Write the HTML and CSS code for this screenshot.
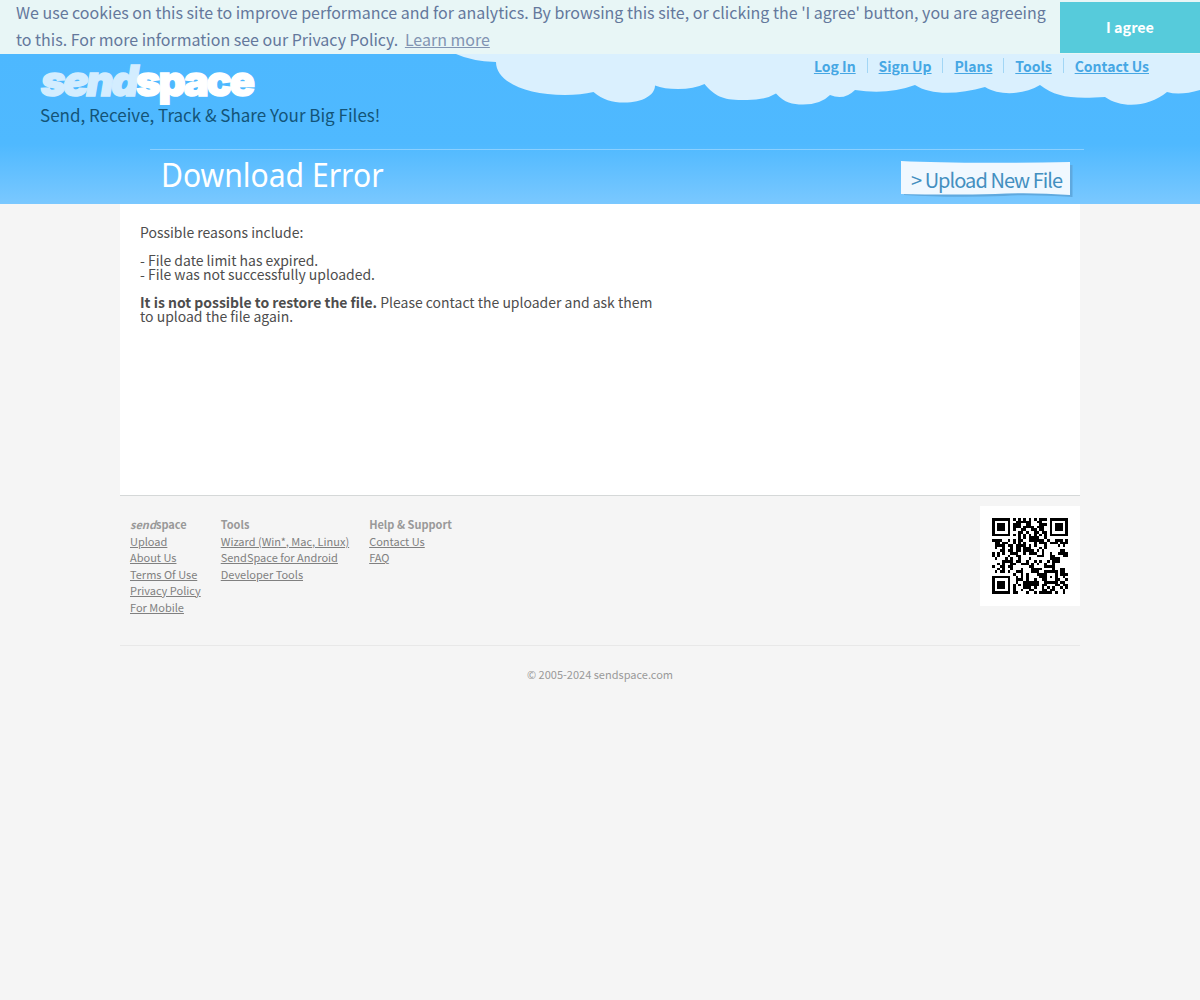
FILE: index.html
```html
<!DOCTYPE html>
<html lang="en">
<head>
<meta charset="utf-8">
<title>Download Error</title>
<link rel="stylesheet" href="styles.css">
</head>
<body>
<div class="cookie">
  <p class="cookie-text">We use cookies on this site to improve performance and for analytics. By browsing this site, or clicking the 'I agree' button, you are agreeing<br>to this. For more information see our Privacy Policy. <a class="learn" href="#">Learn more</a></p>
  <button class="agree">I agree</button>
</div>
<header class="header">
  <svg class="clouds" width="750" height="56" viewBox="450 54 750 56" aria-hidden="true">
    <path fill="#daf0fe" d="M456 54Q471 61 496 62C496 82 526 95 565 95Q581 95 593.500 92C603 100 612 102.500 624 102.500C643 102.500 655 95 655 85.500Q664 89 678 89Q694 89 704.500 84C715 96 722 100 742 100Q764 101 776 93.500C785 103 792 104.500 803 104.500Q821 104.500 830 95Q844 101 855 90Q888 95 915 85C930 95 957 95 985 87C1000 96 1023 95 1040 85C1056 97 1070 99 1105 97C1122 109 1149 107 1167 92Q1180 96 1200 90V54Z"/>
  </svg>
  <div class="top">
    <div class="brand">
      <div class="logo"><i>send</i><span>space</span></div>
      <div class="tagline">Send, Receive, Track &amp; Share Your Big Files!</div>
    </div>
    <nav class="nav"><a href="#">Log In</a><a href="#">Sign Up</a><a href="#">Plans</a><a href="#">Tools</a><a href="#">Contact Us</a></nav>
  </div>
  <div class="titlebar">
    <h1>Download Error</h1>
    <a class="upload" href="#">
      <svg class="paper" width="174" height="38" viewBox="0 0 174 38" aria-hidden="true"><path fill="#5fa9df" d="M4 5L172.500 4V36Q130 33 104 35Q50 37 4 34Z"/><path fill="#f0f8ff" d="M1 0Q60 3 170 1V34Q130 31 95 33Q50 34 1 33Z"/></svg>
      <span>&gt; Upload New File</span>
    </a>
  </div>
</header>
<main class="content">
  <p>Possible reasons include:</p>
  <p>- File date limit has expired.<br>- File was not successfully uploaded.</p>
  <p><b>It is not possible to restore the file.</b> Please contact the uploader and ask them<br>to upload the file again.</p>
</main>
<footer class="footer">
  <div class="links">
    <div class="col"><b><i>send</i>space</b><a href="#">Upload</a><a href="#">About Us</a><a href="#">Terms Of Use</a><a href="#">Privacy Policy</a><a href="#">For Mobile</a></div>
    <div class="col"><b>Tools</b><a href="#">Wizard (Win*, Mac, Linux)</a><a href="#">SendSpace for Android</a><a href="#">Developer Tools</a></div>
    <div class="col"><b>Help &amp; Support</b><a href="#">Contact Us</a><a href="#">FAQ</a></div>
    <div class="qr"><svg id="qr" width="76" height="76" viewBox="0 0 29 29" shape-rendering="crispEdges"></svg></div>
  </div>
  <div class="copyright">© 2005-2024 sendspace.com</div>
</footer>
<script src="qr.js"></script>
</body>
</html>
```
FILE: styles.css
```css
* { box-sizing: border-box; }
body { margin: 0; background: #f5f5f5; font-family: "Noto Sans CJK JP", sans-serif; color: #4d4d4d; }
p { margin: 0; }
.cookie { display: flex; height: 54px; background: #e8f6f6; color: #64789c; }
.cookie-text { width: 1060px; height: 54px; margin-top: -1px; padding-left: 16px; font-size: 15.99px; line-height: 27px; white-space: nowrap; }
.learn { color: #8294b2; margin-left: 3px; }
.agree { width: 140px; height: 51px; margin-top: 2px; padding-bottom: 3px; border: 0; background: #56cbdb; color: #fff; font: bold 14.4px "Noto Sans CJK JP", sans-serif; }
.header { position: relative; height: 150px; background: linear-gradient(#4db8ff 0, #4fb9ff 90px, #7ac8ff 150px); }
.clouds { position: absolute; right: 0; top: 0; }
.top { position: relative; display: flex; justify-content: space-between; height: 95px; padding: 0 51px 0 40px; }
.logo { height: 50px; padding-left: 1px; font: 900 42px/53px Inter, sans-serif; letter-spacing: -2.3px; color: #fff; -webkit-text-stroke: 1.5px; }
.logo i { color: #d3edff; }
.tagline { font-size: 17px; line-height: 22px; color: #135478; white-space: nowrap; }
.nav { display: flex; height: 16px; margin-top: 4px; font-weight: bold; font-size: 14px; line-height: 17px; }
.nav a { color: #46a7e4; padding-left: 11px; margin-left: 10.9px; border-left: 1px solid #a2d6f5; height: 15px; }
.nav a:first-child { border: 0; }
.titlebar { position: relative; display: flex; justify-content: space-between; width: 934px; height: 55px; margin-left: 150px; border-top: 1px solid #8bd0ff; }
h1 { margin: 0; padding-left: 11px; font: 400 33px/49px "Noto Sans", sans-serif; color: #fff; white-space: nowrap; transform: scaleX(.912); transform-origin: 10px 0; }
.upload { position: relative; width: 174px; height: 38px; margin: 11px 10px 0 0; color: #438fc0; font-size: 20px; line-height: 38px; letter-spacing: -.96px; text-decoration: none; }
.paper { position: absolute; left: 0; top: 0; }
.upload span { position: relative; padding-left: 11px; white-space: nowrap; }
.content { width: 960px; height: 291px; margin: 0 auto; padding: 21px 20px; background: #fff; font-size: 13.98px; line-height: 14px; }
.content p { margin-bottom: 14px; }
.footer { width: 960px; margin: 0 auto; border-top: 1px solid #d5d8d8; color: #999; font-size: 11px; line-height: 16.5px; }
.links { display: flex; gap: 20px; height: 150px; padding: 10px 0 0 10px; border-bottom: 1px solid #e8e8e8; }
.col { display: flex; flex-direction: column; align-items: flex-start; padding-top: 10px; }
.col a { color: #808080; }
.qr { width: 100px; height: 100px; margin-left: auto; padding: 12px; background: #fff; }
.qr svg { display: block; }
.copyright { padding-top: 20px; text-align: center; }
```
FILE: qr.js
```js
// QR code, version 3, error correction level L, byte mode.
const SIZE = 29, DATA = 55, ECC = 15;

function codewords(text) {
  let bits = "0100" + text.length.toString(2).padStart(8, "0");
  for (const c of text) bits += c.charCodeAt(0).toString(2).padStart(8, "0");
  bits += "0000";
  const data = bits.match(/.{8}/g).map(b => parseInt(b, 2));
  for (let pad = 0xec; data.length < DATA; pad ^= 0xec ^ 0x11) data.push(pad);
  const mul = (a, b) => {
    let r = 0;
    for (; b; b >>= 1) {
      if (b & 1) r ^= a;
      a = (a << 1) ^ (a & 128 ? 0x11d : 0);
    }
    return r;
  };
  let gen = [1], root = 1;
  for (let i = 0; i < ECC; i++) {
    const next = [...gen, 0];
    gen.forEach((g, j) => { next[j + 1] ^= mul(g, root); });
    gen = next;
    root = mul(root, 2);
  }
  const rem = [...data, ...Array(ECC).fill(0)];
  for (let i = 0; i < DATA; i++) {
    const f = rem[i];
    gen.forEach((g, j) => { rem[i + j] ^= mul(g, f); });
  }
  return [...data, ...rem.slice(DATA)];
}

const masks = [
  (x, y) => (x + y) % 2, (x, y) => y % 2, (x, y) => x % 3, (x, y) => (x + y) % 3,
  (x, y) => ((x / 3 | 0) + (y / 2 | 0)) % 2, (x, y) => x * y % 2 + x * y % 3,
  (x, y) => (x * y % 2 + x * y % 3) % 2, (x, y) => ((x + y) % 2 + x * y % 3) % 2
];

function build(words, mask) {
  const m = Array.from({ length: SIZE }, () => Array(SIZE).fill(null));
  const set = (x, y, v) => { if (m[y] && x >= 0 && x < SIZE) m[y][x] = v ? 1 : 0; };
  for (let i = 0; i < SIZE; i++) { set(i, 6, i % 2 === 0); set(6, i, i % 2 === 0); }
  for (const [cx, cy] of [[3, 3], [25, 3], [3, 25]])
    for (let dy = -4; dy <= 4; dy++)
      for (let dx = -4; dx <= 4; dx++) {
        const r = Math.max(Math.abs(dx), Math.abs(dy));
        set(cx + dx, cy + dy, r !== 2 && r !== 4);
      }
  for (let dy = -2; dy <= 2; dy++)
    for (let dx = -2; dx <= 2; dx++) set(22 + dx, 22 + dy, Math.max(Math.abs(dx), Math.abs(dy)) !== 1);
  let rem = (8 | mask);
  for (let i = 0; i < 10; i++) rem = (rem << 1) ^ ((rem >> 9) * 0x537);
  const format = ((8 | mask) << 10 | rem) ^ 0x5412;
  const bit = i => format >> i & 1;
  for (let i = 0; i < 6; i++) set(8, i, bit(i));
  set(8, 7, bit(6)); set(8, 8, bit(7)); set(7, 8, bit(8));
  for (let i = 9; i < 15; i++) set(14 - i, 8, bit(i));
  for (let i = 0; i < 8; i++) set(SIZE - 1 - i, 8, bit(i));
  for (let i = 8; i < 15; i++) set(8, SIZE - 15 + i, bit(i));
  set(8, SIZE - 8, 1);
  let n = 0;
  for (let right = SIZE - 1; right > 0; right -= 2) {
    if (right === 6) right = 5;
    for (let v = 0; v < SIZE; v++)
      for (let j = 0; j < 2; j++) {
        const x = right - j, y = (right + 1 & 2) === 0 ? SIZE - 1 - v : v;
        if (m[y][x] !== null) continue;
        const b = n < words.length * 8 ? words[n >> 3] >> (7 - (n & 7)) & 1 : 0;
        n++;
        set(x, y, b ^ (masks[mask](x, y) === 0 ? 1 : 0));
      }
  }
  return m;
}

function penalty(m) {
  let score = 0;
  const lines = [...m.map(r => r.join("")), ...m.map((_, x) => m.map(r => r[x]).join(""))];
  for (const line of lines) {
    for (const run of line.match(/0{5,}|1{5,}/g) || []) score += run.length - 2;
    score += 40 * (line.match(/(?=10111010000|00001011101)/g) || []).length;
  }
  for (let y = 1; y < SIZE; y++)
    for (let x = 1; x < SIZE; x++)
      if (m[y][x] === m[y - 1][x] && m[y][x] === m[y][x - 1] && m[y][x] === m[y - 1][x - 1]) score += 3;
  const dark = m.flat().reduce((a, b) => a + b) / SIZE / SIZE;
  return score + 10 * Math.floor(Math.abs(dark - .5) * 20);
}

const words = codewords("market://search?q=pname:com.app.sendspace.mobile");
const best = masks.map((_, i) => build(words, i)).sort((a, b) => penalty(a) - penalty(b))[0];
let d = "";
best.forEach((row, y) => row.forEach((on, x) => { if (on) d += `M${x} ${y}h1v1h-1z`; }));
const path = document.createElementNS("http://www.w3.org/2000/svg", "path");
path.setAttribute("d", d);
document.getElementById("qr").append(path);
```
